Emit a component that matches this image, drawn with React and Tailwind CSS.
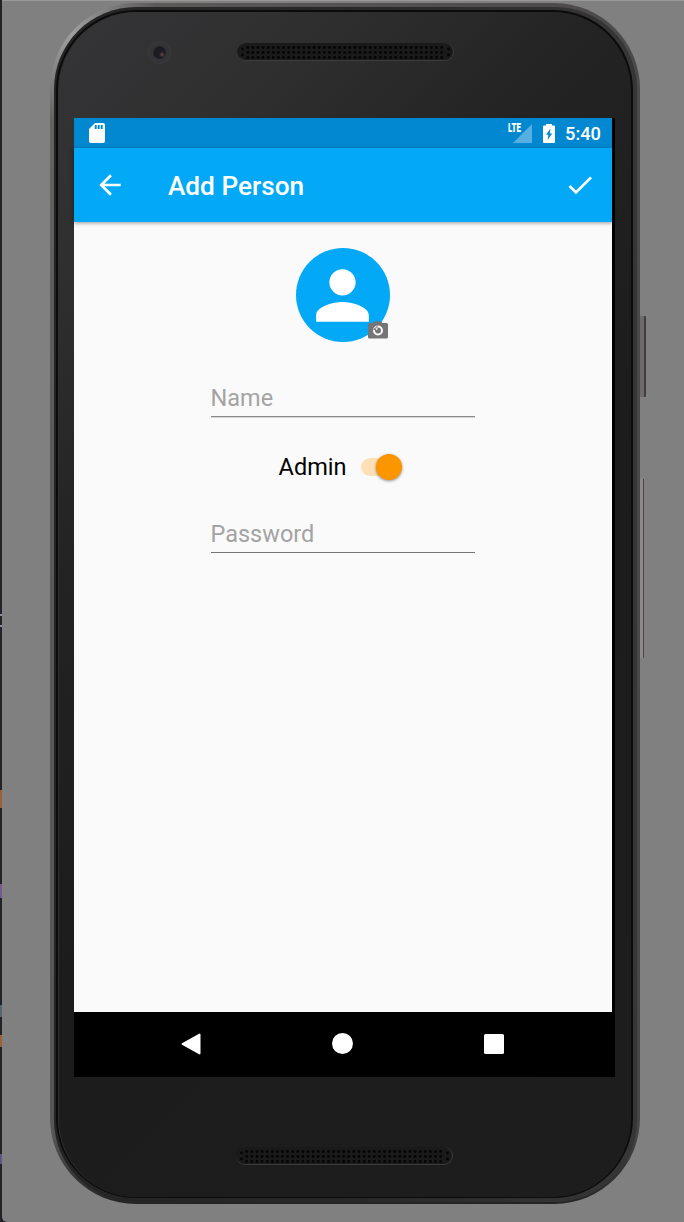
const cornerDots = [
  [5.5, 6], [5.5, 12],
  [211.5, 6], [211.5, 12],
];

function Grille() {
  const cols = Array.from({ length: 40 }, (_, i) => 10.8 + i * 5.1).filter((x) => x < 208);
  return (
    <div className="h-[18px] w-[217px] rounded-full border-r border-b border-[#3c3c3c] bg-[#1a1a1a]">
      <svg width="217" height="18" viewBox="0 0 217 18" className="block">
        {cols.map((x) =>
          [4.5, 9.5, 14.5].map((y) => <circle key={`${x}-${y}`} cx={x} cy={y} r="1.4" fill="#050505" />)
        )}
        {cornerDots.map(([x, y]) => (
          <circle key={`${x}-${y}`} cx={x} cy={y} r="1.4" fill="#050505" />
        ))}
      </svg>
    </div>
  );
}

function Icon({ d, className }) {
  return (
    <svg viewBox="0 0 24 24" fill="currentColor" className={className}>
      <path d={d} />
    </svg>
  );
}

function StatusBar() {
  return (
    <div className="flex h-[30px] items-center bg-[#0288d1] pr-[11px] pl-[11px] text-white">
      <Icon
        className="size-[24px]"
        d="M18 2h-8L4.020 8 4 20c0 1.100.9 2 2 2h12c1.100 0 2-.9 2-2V4c0-1.100-.9-2-2-2zm-6.300 6h-2V4h2v4zm3 0h-2V4h2v4zm3 0h-2V4h2v4z"
      />
      <div className="relative ml-auto h-[20px] w-[24px]">
        <svg width="19" height="19" className="absolute right-0 bottom-0">
          <path d="M19 0V19H0Z" fill="#fff" fillOpacity="0.33" />
        </svg>
        <span className="absolute -top-[1px] left-0 origin-left scale-x-[0.66] text-[12px] leading-[12px] font-black">LTE</span>
      </div>
      <svg viewBox="0 0 12 19" className="ml-[11px] h-[19px] w-[12px]">
        <path
          fill="#fff"
          fillRule="evenodd"
          d="M3 0H9V1.500H11Q12 1.500 12 2.500V18Q12 19 11 19H1Q0 19 0 18V2.500Q0 1.500 1 1.500H3ZM7.500 4.500L3 10.800H5.300L4.600 16L9.200 9.600H6.800Z"
        />
      </svg>
      <span className="ml-[10px] pt-px text-[18.300px] leading-[30px] font-medium">5:40</span>
    </div>
  );
}

function Toolbar() {
  return (
    <div className="relative flex h-[74px] items-center bg-[#03a9f7] pr-[16px] pl-[20px] text-white shadow-[0_1px_4px_rgba(0,0,0,0.4)]">
      <Icon className="size-[32px]" d="M20 11H7.830l5.590-5.590L12 4l-8 8 8 8 1.410-1.410L7.830 13H20v-2z" />
      <h1 className="ml-[42px] pt-[2px] text-[26.200px] leading-[32px] font-medium">Add Person</h1>
      <Icon className="ml-auto size-[32px]" d="M9 16.170L4.830 12l-1.420 1.410L9 19 21 7l-1.410-1.410z" />
    </div>
  );
}

function Avatar() {
  return (
    <div className="relative flex size-[94px] justify-center rounded-full bg-[#03a9f7] pt-[7.500px]">
      <Icon
        className="size-[79px] text-white"
        d="M12 12c2.210 0 4-1.790 4-4s-1.790-4-4-4-4 1.790-4 4 1.790 4 4 4zm0 2c-2.670 0-8 1.340-8 4v2h16v-2c0-2.660-5.330-4-8-4z"
      />
      <svg width="20" height="18" viewBox="0 0 20 18" className="absolute top-[72.500px] left-[72px]">
        <path d="M1.500 2H5L6.500 0.500H13L14.500 2H18.500Q20 2 20 3.500V16Q20 17.500 18.500 17.500H1.500Q0 17.500 0 16V3.500Q0 2 1.500 2Z" fill="#757575" />
        <circle cx="10" cy="9.500" r="4" fill="none" stroke="#fafafa" strokeWidth="2" />
        <path d="M5 8.500L9.500 4.500V7.500L8 9.500Z" fill="#757575" />
        <path d="M7 6.500H9.500V8L8.500 9.500Z" fill="#dfe8ec" />
      </svg>
    </div>
  );
}

function Field({ placeholder, className }) {
  return (
    <input
      placeholder={placeholder}
      className={`block h-[36px] w-[264px] border-b bg-transparent pb-px text-[23.500px] leading-[32px] outline-none placeholder:text-[#a3a3a3] ${className}`}
    />
  );
}

function Screen() {
  return (
    <div className="flex h-[959px] w-[541px] flex-col bg-black">
      <div className="flex h-[894px] w-[538px] flex-col bg-[#fafafa]">
        <StatusBar />
        <Toolbar />
        <div className="flex flex-col items-center pt-[26px] pr-px">
          <Avatar />
          <Field placeholder="Name" className="mt-[39px] border-[#8a8a8a] shadow-[0_1px_0_#d8d8d8]" />
          <div className="mt-[33px] flex h-[34px] items-center pr-[4px]">
            <span className="text-[23.500px] leading-[34px] text-black">Admin</span>
            <div className="mb-px ml-[15px] flex h-[18px] w-[41px] items-center justify-end rounded-full bg-[#fde0b6]">
              <div className="size-[26px] rounded-full bg-[#fb9600] shadow-[0_1px_3px_rgba(0,0,0,0.45)]" />
            </div>
          </div>
          <Field placeholder="Password" className="mt-[33px] border-[#757575]" />
        </div>
      </div>
      <div className="flex h-[65px] w-[538px] items-center pb-[2px] pl-[107px]">
        <svg width="20" height="22" viewBox="0 0 20 22" className="block">
          <path d="M1.500 11L18.500 1.500V20.500Z" fill="#fff" stroke="#fff" strokeWidth="2" strokeLinejoin="round" />
        </svg>
        <div className="ml-[131px] size-[21px] rounded-full bg-white" />
        <div className="ml-[131px] size-[20px] rounded-[1.500px] bg-white" />
      </div>
    </div>
  );
}

export default function App() {
  return (
    <div className="relative h-[1222px] w-[684px] overflow-hidden bg-[#222326] pl-[2px] font-[Roboto,sans-serif]">
      <div className="absolute top-[614px] left-0 h-[2px] w-[2px] bg-[#8b919c]" />
      <div className="absolute top-[625px] left-0 h-[2px] w-[2px] bg-[#8b919c]" />
      <div className="absolute top-[790px] left-0 h-[18px] w-[2px] bg-[#9c6135]" />
      <div className="absolute top-[884px] left-0 h-[14px] w-[2px] bg-[#725c8f]" />
      <div className="absolute top-[1005px] left-0 h-[12px] w-[2px] bg-[#58646c]" />
      <div className="absolute top-[1035px] left-0 h-[12px] w-[2px] bg-[#9c6135]" />
      <div className="absolute top-[1154px] left-0 h-[10px] w-[2px] bg-[#625585]" />

      <div className="h-[1222px] rounded-bl-[5px] border-t border-[#999] bg-[#808080] pt-[2px] pl-[48px]">
        <div className="relative h-[1201px] w-[590px]">
          <div className="absolute top-[313px] -right-[6px] h-[81px] w-[6px] rounded-r-[1px] border-r-2 border-[#3e3e3e] bg-[#6f6b6b]" />
          <div className="absolute top-[476px] -right-[4px] h-[179px] w-[4px] border-r border-[#484848] bg-[#8d8989]" />
          <div className="relative h-[1201px] w-[590px] rounded-[86px] bg-[linear-gradient(0deg,#242424_0px,#24242400_70px),radial-gradient(circle_at_20px_30px,#a0a0a0_0px,#a0a0a000_90px),linear-gradient(100deg,#696666_0%,#5d5a5a_8%,#504e4e_50%,#464444_100%)] pt-[4px] pr-[3px] pb-[2px] pl-[4px]">
            <div className="h-[1195px] rounded-[82px] bg-[linear-gradient(90deg,#242424_0%,#282828_50%,#373636_100%)] pt-[3px] pr-[4px] pb-[4px] pl-[2px]">
              <div className="h-[1188px] rounded-[80px] bg-[#0b0b0b] pt-[2px] pr-[2px] pb-px pl-[2px]">
                <div className="relative flex h-[1185px] flex-col items-center rounded-[78px] border-l border-[#303030] bg-[linear-gradient(135deg,#353537_0%,#2f2f30_15%,#232323_32%,#1c1c1d_55%,#1d1d1e_100%)] pt-[31px]">
                  <div className="absolute top-[29px] left-[89px] flex size-[23px] items-center justify-center rounded-full border border-[#3b3b3d] bg-[#343436]">
                    <div className="size-[13px] rounded-full bg-[radial-gradient(circle_at_70%_66%,#6b4b4b_0%,#201d27_22%,#1b1a20_60%,#343238_100%)]" />
                  </div>
                  <Grille />
                  <div className="mt-[57px] mr-px">
                    <Screen />
                  </div>
                  <div className="mt-[70px] mr-px">
                    <Grille />
                  </div>
                </div>
              </div>
            </div>
          </div>
        </div>
      </div>
    </div>
  );
}
